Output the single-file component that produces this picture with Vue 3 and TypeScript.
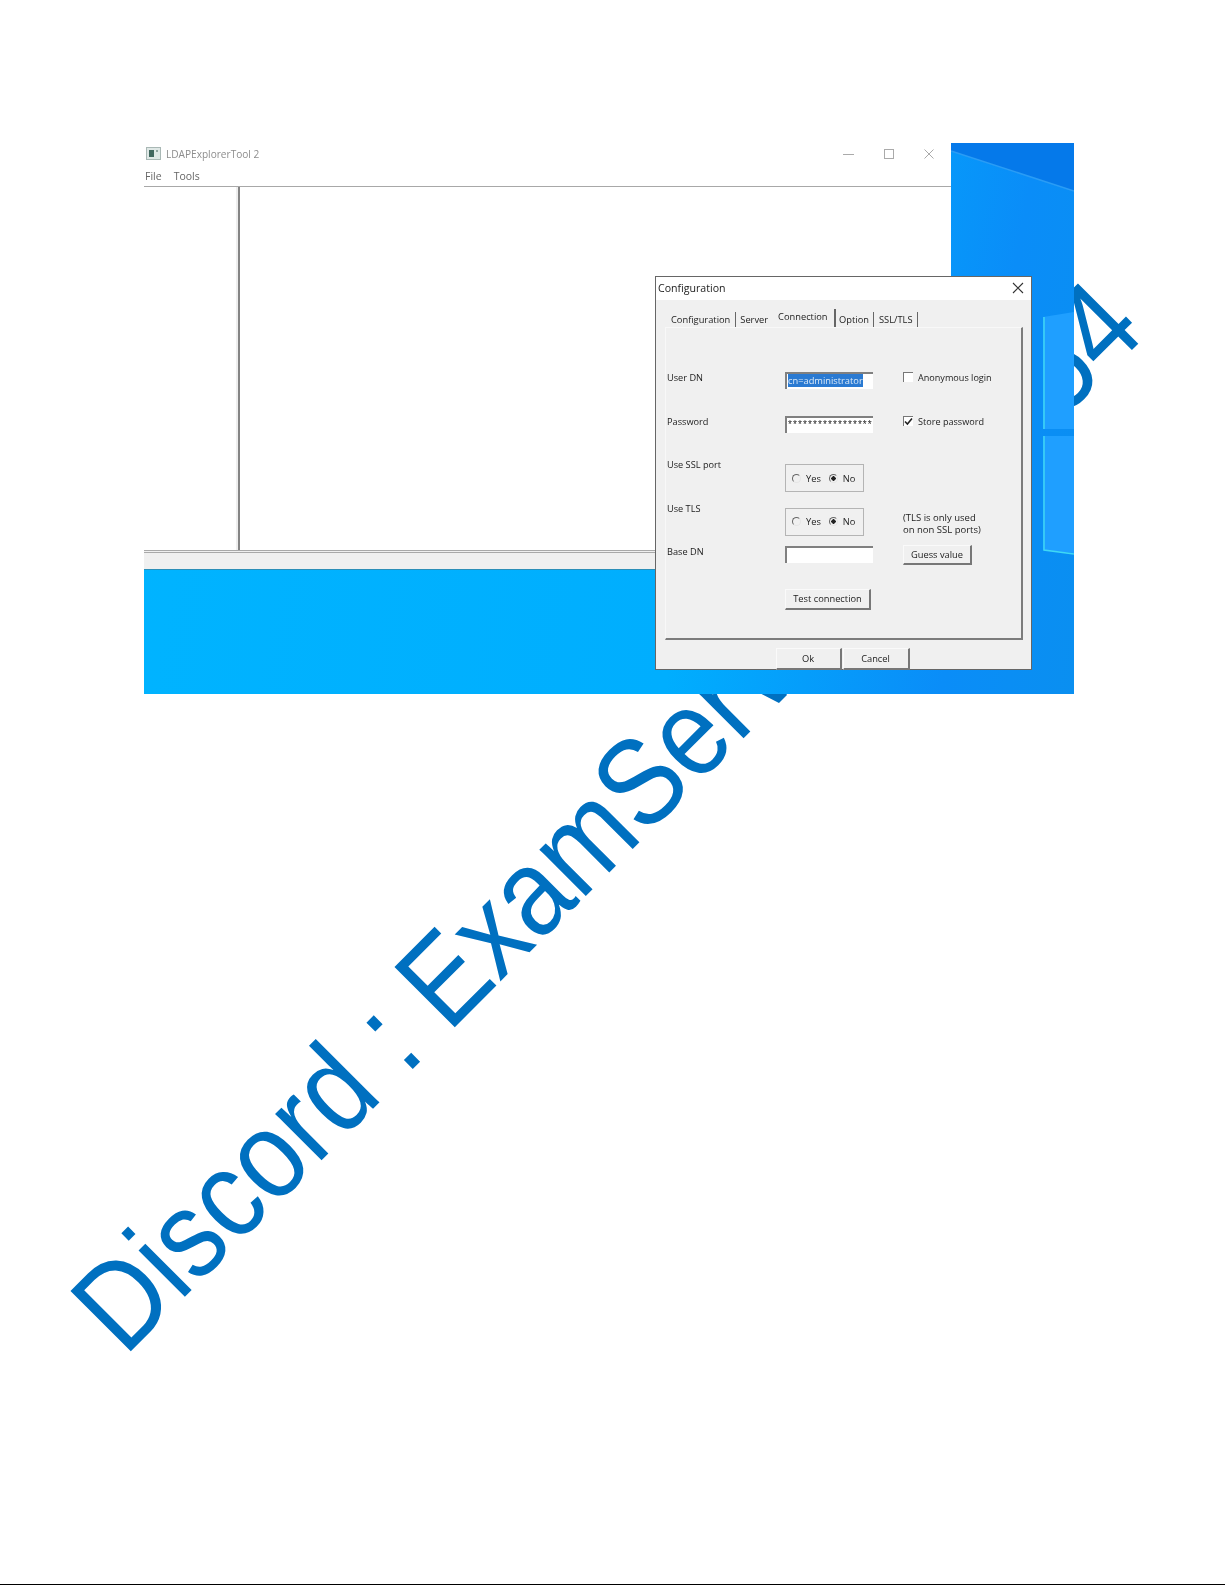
<script setup lang="ts">
interface Tab {
  label: string
  active?: boolean
}

const tabs: Tab[] = [
  { label: 'Configuration' },
  { label: 'Server' },
  { label: 'Connection', active: true },
  { label: 'Option' },
  { label: 'SSL/TLS' },
]
</script>

<template>
  <div class="page">
    <div class="watermark">Discord : ExamServer #12354</div>

    <div class="shot">
      <!-- wallpaper: light beam and the panes of the windows logo -->
      <svg class="wallpaper" width="930" height="551" viewBox="0 0 930 551">
        <polygon points="807,0 930,0 930,48 807,8" fill="#0579ea" />
        <polyline points="807,8 930,48" stroke="#2a9cf5" stroke-width="1.5" fill="none" />
        <polygon points="899,174 930,169 930,286 899,286" fill="#1f9fff" />
        <polygon points="899,293 930,293 930,410 899,407" fill="#1f9fff" />
        <path d="M900 174V286M900 293V407L930 411" stroke="#3fd8f5" stroke-width="1.5" fill="none" />
      </svg>

      <div class="window">
        <div class="titlebar">
          <div class="app-title">
            <svg class="app-icon" width="15" height="13" viewBox="0 0 15 13">
              <rect x="0.5" y="0.5" width="14" height="12" fill="#dfe8e6" stroke="#a9b8b5" />
              <rect x="3" y="3" width="5" height="7" fill="#41685f" />
              <rect x="10" y="3" width="2" height="2" fill="#8fa5a0" />
            </svg>
            <span>LDAPExplorerTool 2</span>
          </div>
          <div class="win-controls">
            <svg width="12" height="12" viewBox="0 0 12 12"><path d="M0 6.5H11" stroke="#aaa" /></svg>
            <svg width="12" height="12" viewBox="0 0 12 12"><rect x="1.5" y="1.5" width="9" height="9" fill="none" stroke="#aaa" /></svg>
            <svg width="12" height="12" viewBox="0 0 12 12"><path d="M1.5 1.5L10.5 10.5M10.5 1.5L1.5 10.5" stroke="#aaa" /></svg>
          </div>
        </div>
        <div class="menubar">
          <span>File</span>
          <span>Tools</span>
        </div>
        <div class="panes">
          <div class="tree"></div>
          <div class="content"></div>
        </div>
        <div class="statusbar"></div>
      </div>

      <div class="dialog">
        <div class="dialog-title">
          <span>Configuration</span>
          <svg width="12" height="12" viewBox="0 0 12 12"><path d="M1 1L11 11M11 1L1 11" stroke="#333" stroke-width="1.1" /></svg>
        </div>
        <div class="dialog-body">
          <div class="tabs">
            <div v-for="tab in tabs" :key="tab.label" class="tab" :class="{ active: tab.active }">{{ tab.label }}</div>
          </div>
          <div class="tab-page">
            <div class="form">
              <div class="label">User DN</div>
              <div class="field"><span class="selected">cn=administrator</span></div>
              <label class="check"><i class="box"></i>Anonymous login</label>

              <div class="label">Password</div>
              <div class="field password">*****************</div>
              <label class="check">
                <i class="box">
                  <svg width="9" height="9" viewBox="0 0 9 9"><path d="M1 4.5L3.4 7L8 1.5" stroke="#222" stroke-width="1.6" fill="none" /></svg>
                </i>
                Store password
              </label>

              <div class="label">Use SSL port</div>
              <div class="group">
                <span class="radio"></span>Yes
                <span class="radio on"></span>No
              </div>
              <div></div>

              <div class="label">Use TLS</div>
              <div class="group">
                <span class="radio"></span>Yes
                <span class="radio on"></span>No
              </div>
              <div class="note">(TLS is only used<br />on non SSL ports)</div>

              <div class="label">Base DN</div>
              <div class="field"></div>
              <div><button class="btn guess">Guess value</button></div>

              <div></div>
              <div><button class="btn test">Test connection</button></div>
            </div>
          </div>
          <div class="dialog-footer">
            <button class="btn ok">Ok</button>
            <button class="btn cancel">Cancel</button>
          </div>
        </div>
      </div>
    </div>
  </div>
</template>

<style scoped>
.page {
  position: relative;
  height: 1585px;
  box-sizing: border-box;
  padding: 143px 0 0 144px;
  border-bottom: 1px solid #000;
  background: #fff;
  overflow: hidden;
  font-family: "Open Sans", "Noto Sans", sans-serif;
}

.watermark {
  position: absolute;
  left: 101px;
  top: 1327px;
  line-height: 0;
  white-space: nowrap;
  font-family: "Liberation Sans", Arial, sans-serif;
  font-size: 124px;
  color: #0070c0;
  transform-origin: 0 0;
  transform: rotate(-45deg) scaleX(0.875);
  margin-left: -7px;
}

.shot {
  position: relative;
  width: 930px;
  height: 551px;
  background: linear-gradient(100deg, #00b4ff 0%, #00aefe 60%, #0a8df8 87%, #0a8ff0 100%);
}

.wallpaper {
  position: absolute;
  left: 0;
  top: 0;
}

.window {
  position: relative;
  width: 807px;
  height: 427px;
  display: flex;
  flex-direction: column;
  background: #fff;
  filter: blur(0.4px);
}

.titlebar {
  height: 25px;
  display: flex;
  justify-content: space-between;
  align-items: center;
  padding: 0 0 4px 2px;
  box-sizing: border-box;
  font-size: 10.1px;
  color: #8d8d8d;
}
.app-title {
  display: flex;
  align-items: center;
  gap: 5px;
}
.win-controls {
  display: flex;
  gap: 28px;
  padding-right: 16px;
}

.menubar {
  height: 19px;
  box-sizing: border-box;
  display: flex;
  gap: 12px;
  align-items: center;
  padding: 0 0 3px 1px;
  font-size: 10.5px;
  color: #666;
  border-bottom: 1px solid #a8a8a8;
}

.panes {
  flex: 1;
  display: flex;
}
.tree {
  width: 92px;
  border-right: 2px solid #eee;
}
.content {
  flex: 1;
  border-left: 2px solid #848484;
}

.statusbar {
  height: 20px;
  box-sizing: border-box;
  background: #f0f0f0;
  border-top: 3px double #a9a9a9;
  border-bottom: 1px solid #2b8fb8;
}

.dialog {
  position: absolute;
  left: 511px;
  top: 133px;
  width: 377px;
  height: 394px;
  box-sizing: border-box;
  display: flex;
  flex-direction: column;
  border: 1px solid #666;
  background: #f0f0f0;
  color: #222;
  font-size: 9.3px;
  filter: blur(0.4px);
}

.dialog-title {
  height: 23px;
  flex: none;
  display: flex;
  justify-content: space-between;
  align-items: center;
  padding: 0 7px 2px 2px;
  box-sizing: border-box;
  background: #fff;
  font-size: 10.6px;
}

.dialog-body {
  flex: 1;
  display: flex;
  flex-direction: column;
  padding: 10px 8px 0 9px;
}

.tabs {
  height: 17px;
  display: flex;
  padding-left: 6px;
  align-items: flex-start;
}
.tab {
  padding: 0 4.5px 0 0;
  margin: 2px 4.5px 0 0;
  border-right: 1px solid #666;
  line-height: 15px;
  height: 15px;
  font-size: 9.3px;
}
.tab:nth-child(2) {
  border-right: none;
  margin-right: 0;
  padding-right: 10px;
}
.tab.active {
  height: 18px;
  line-height: 16px;
  margin-top: -1px;
  margin-right: 3.5px;
  padding-right: 6px;
  border-right-width: 2px;
}

.tab-page {
  height: 313px;
  flex: none;
  box-sizing: border-box;
  padding: 42px 0 0 1px;
  border-right: 2px solid #7c7c7c;
  border-bottom: 2px solid #7c7c7c;
  border-top: 1px solid #f8f8f8;
  border-left: 1px solid #f8f8f8;
}

.form {
  display: grid;
  grid-template-columns: 118px 118px 1fr;
  grid-auto-rows: 43.5px;
}

.label {
  line-height: 16px;
  font-size: 9.2px;
}

.field {
  width: 88px;
  height: 17px;
  margin-top: 2px;
  box-sizing: border-box;
  padding-left: 1px;
  background: #fff;
  border-left: 2px solid #808080;
  border-top: 2px solid #808080;
  line-height: 14px;
  font-size: 9.3px;
  white-space: nowrap;
  overflow: hidden;
}
.selected {
  background: #2a7ad2;
  color: #dbe9f7;
}
.password {
  font-family: "Liberation Sans", sans-serif;
  font-size: 10px;
  letter-spacing: 1.1px;
  line-height: 13px;
}

.check {
  display: flex;
  align-items: center;
  gap: 5px;
  height: 16px;
  line-height: 16px;
  font-size: 9.1px;
}
.box {
  width: 10px;
  height: 10px;
  box-sizing: border-box;
  display: flex;
  background: #fff;
  border-left: 1px solid #777;
  border-top: 1px solid #777;
  margin-top: -2px;
}

.group {
  width: 79px;
  height: 28px;
  margin-top: 7px;
  box-sizing: border-box;
  display: flex;
  align-items: center;
  padding-left: 6px;
  border: 1px solid #b4b4b4;
  font-size: 9.3px;
}

.radio {
  position: relative;
  width: 9px;
  height: 9px;
  box-sizing: border-box;
  margin-right: 5px;
  border-radius: 50%;
  border: 1px solid;
  border-color: #666 #e6e6e6 #e6e6e6 #666;
}
.radio.on {
  margin-left: 8px;
  background: radial-gradient(circle, #222 0 2px, transparent 2.4px);
}

.note {
  margin-top: 11px;
  line-height: 12.5px;
  font-size: 9.5px;
  white-space: nowrap;
}

.btn {
  display: block;
  padding: 0;
  box-sizing: border-box;
  background: #f0f0f0;
  border: none;
  border-right: 2px solid #777;
  border-bottom: 2px solid #777;
  border-top: 1px solid #fafafa;
  border-left: 1px solid #fafafa;
  color: #222;
  font-family: inherit;
  font-size: 9.3px;
}
.guess {
  width: 69px;
  height: 20px;
  margin-top: 1px;
}
.test {
  width: 86px;
  height: 21px;
  margin-top: 1px;
}

.dialog-footer {
  display: flex;
  justify-content: center;
  gap: 1px;
  margin-top: 8px;
  padding-right: 3px;
}
.ok {
  width: 66px;
  height: 22px;
}
.cancel {
  width: 67px;
  height: 22px;
}
</style>

<style>
html,
body {
  margin: 0;
  background: #fff;
}
</style>
